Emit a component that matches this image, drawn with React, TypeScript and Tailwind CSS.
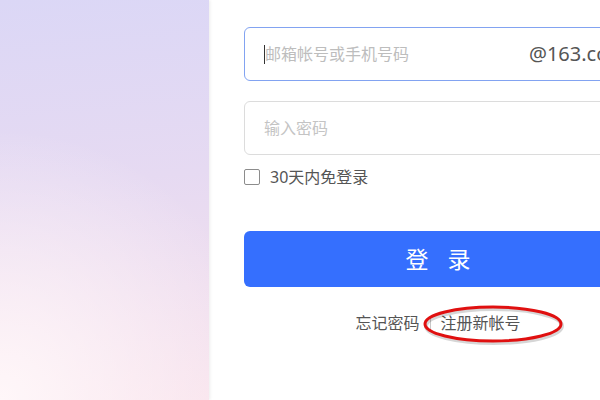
import React from 'react';

// Login form page: gradient side panel plus a 163 mail sign-in form
const FONT = '"Noto Sans", "Noto Sans CJK SC", sans-serif';

export default function App() {
  return (
    <div
      className="flex w-[600px] h-[400px] overflow-hidden bg-white"
      style={{ fontFamily: FONT }}
    >
      {/* Left decorative panel */}
      <div className="w-[209px] h-full shrink-0 bg-[radial-gradient(circle_at_0%_100%,#fff7f9_0%,rgba(255,247,249,0)_60%),linear-gradient(175deg,#dbd7f6_0%,#e6daf2_45%,#f8e2ec_100%)] shadow-[1px_0_3px_rgba(0,0,0,0.08)]" />

      {/* Form column */}
      <div className="flex-1 relative pl-[35px] pt-[27px]">
        <div className="w-[388px] flex flex-col">
          {/* Account input */}
          <div className="h-[54px] rounded-md border border-[#82a3f1] flex items-center pl-[19px] pr-[4px]">
            <span className="w-px h-[19px] bg-[#333]" />
            <span className="text-[16px] text-[#bdbdbd]">邮箱帐号或手机号码</span>
            <span className="ml-auto text-[20px] text-[#555]">@163.com</span>
          </div>

          {/* Password input */}
          <div className="mt-[20px] h-[54px] rounded-md border border-[#dcdcdc] flex items-center pl-[19px]">
            <span className="text-[16px] text-[#c4c4c4]">输入密码</span>
          </div>

          {/* Remember me */}
          <div className="mt-[14px] h-[16px] flex items-center gap-[10px]">
            <span className="w-[16px] h-[16px] rounded-[2px] border border-[#8c8c8c] bg-white" />
            <span className="text-[16px] text-[#555]">30天内免登录</span>
          </div>

          {/* Submit */}
          <button className="mt-[46px] h-[56px] rounded-md bg-[#356ffe] flex items-center justify-center gap-[19px] text-white text-[23px]">
            <span>登</span>
            <span>录</span>
          </button>

          {/* Links */}
          <div className="mt-[26px] h-[20px] flex items-center justify-center text-[16px] text-[#555]">
            <span>忘记密码</span>
            <span className="mx-[10px] w-px h-[14px] bg-[#c8c8c8]" />
            <span>注册新帐号</span>
          </div>
        </div>

        {/* Red annotation ellipse */}
        <svg
          className="absolute left-[210px] top-[301px] w-[148px] h-[46px] pointer-events-none"
          viewBox="0 0 148 46"
        >
          <ellipse cx="74" cy="23" rx="68" ry="17" fill="none" stroke="rgba(0,0,0,0.16)" strokeWidth="4" transform="translate(1 2)" />
          <ellipse cx="74" cy="23" rx="68" ry="17" fill="none" stroke="#e01010" strokeWidth="3" />
        </svg>
      </div>
    </div>
  );
}
